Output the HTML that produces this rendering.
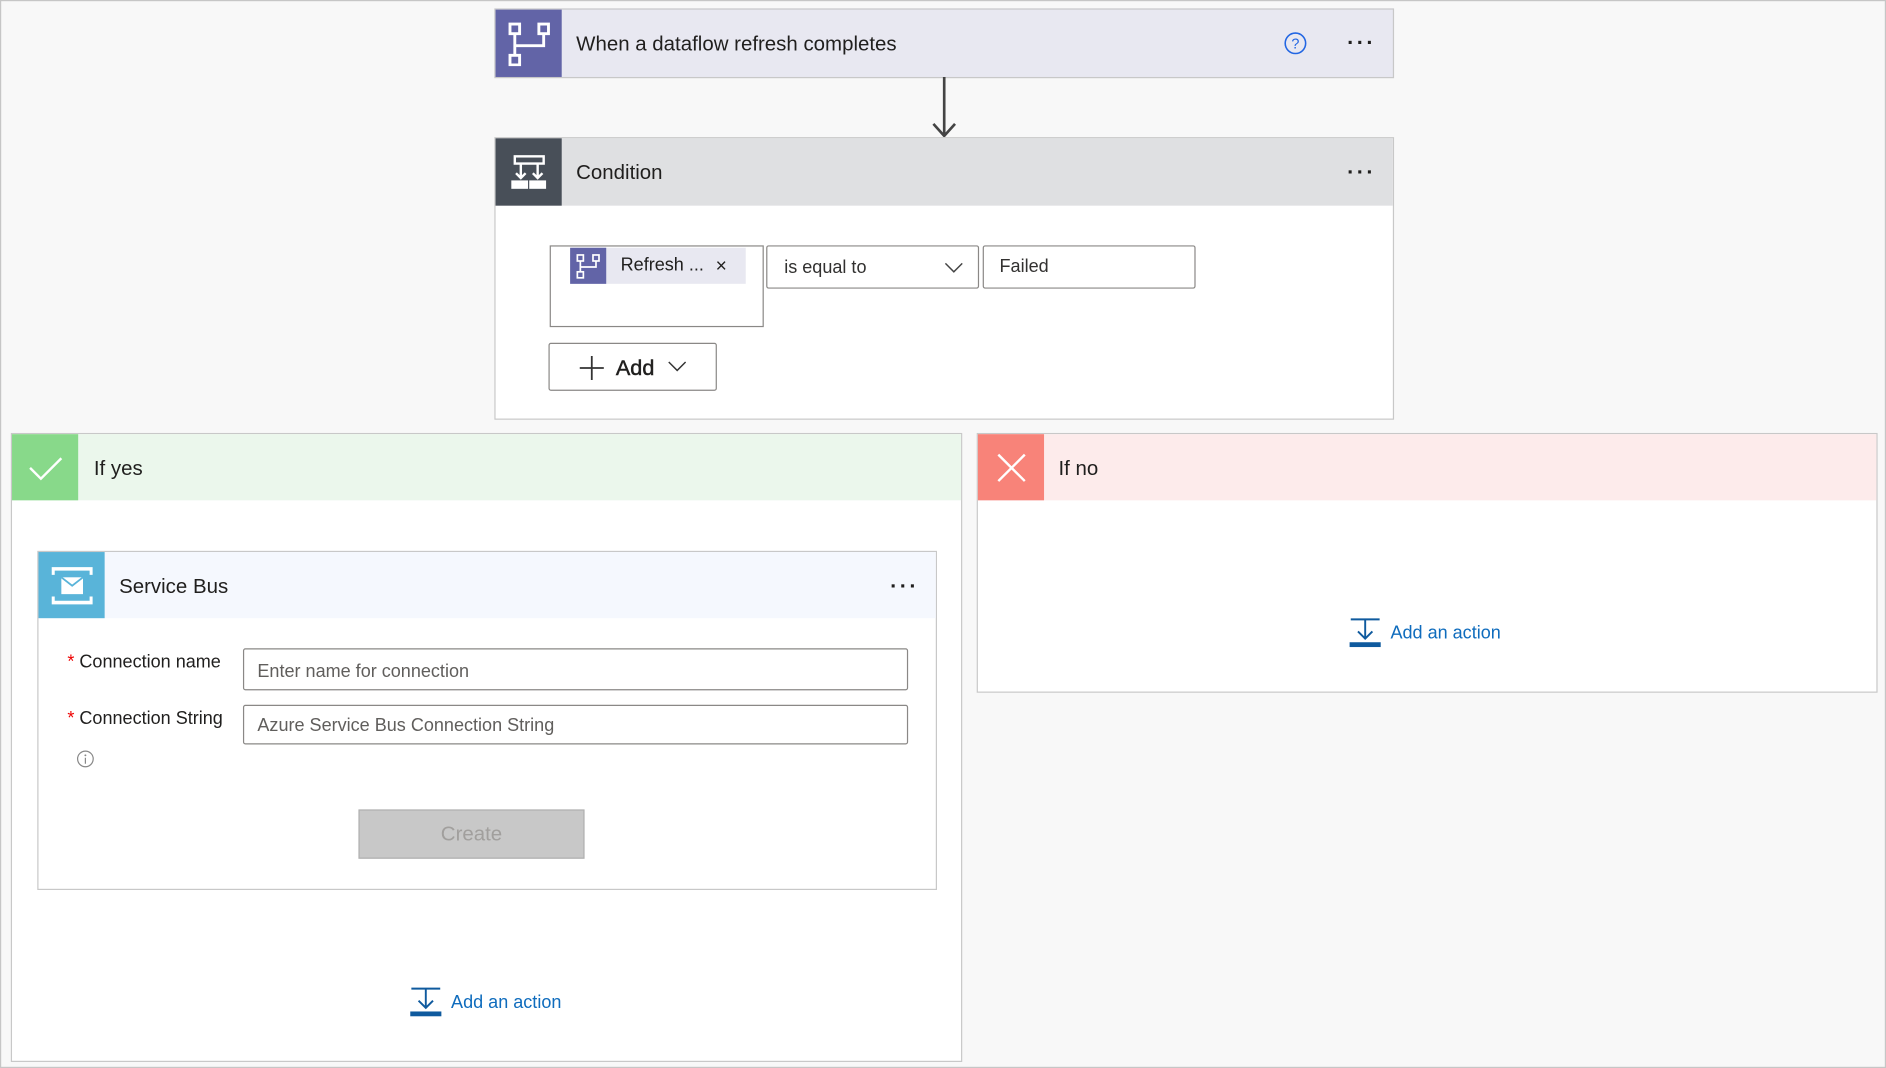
<!DOCTYPE html>
<html><head><meta charset="utf-8"><style>
*{box-sizing:border-box;margin:0;padding:0}
html,body{width:1886px;height:1068px;overflow:hidden;background:#f8f8f8}
#w{position:absolute;left:0;top:0;width:1568px;height:888px;transform:scale(1.20281,1.20270);transform-origin:0 0;font-family:"Segoe UI","Liberation Sans",sans-serif;color:#201f1e;border:1px solid #c6c6c6;background:#f8f8f8}
.a{position:absolute}
.card{position:absolute;border:1px solid #c8c8c8;background:#fff}
.hd{position:absolute;left:0;top:0;right:0;height:56px}
.ic{position:absolute;left:0;top:0;width:55px;height:56px;display:flex;align-items:center;justify-content:center}
.tt{position:absolute;left:67px;top:1px;line-height:56px;font-size:17px}
.dots{position:absolute;right:14px;top:18px;font-size:18px;letter-spacing:2px;font-weight:bold}
.inp{position:absolute;border:1px solid #8a8886;border-radius:2px;background:#fff;font-size:15px;color:#605e5c;padding-left:11px}
.lnk{position:absolute;color:#0f6cbd;font-size:15px;display:flex;align-items:center;gap:8px}
</style></head><body><div id="w">

<div class="card" style="left:410px;top:6px;width:748px;height:58px;background:#e8e8f1">
 <div class="ic" style="background:#6264a7"><svg width="36" height="38" viewBox="0 0 36 38" fill="none" stroke="#fff" stroke-width="2.4"><rect x="2" y="3" width="8" height="8"/><rect x="26" y="3" width="8" height="8"/><rect x="2" y="29" width="8" height="8"/><path d="M6 11V29M30 11V21H6"/></svg></div>
 <div class="tt">When a dataflow refresh completes</div>
 <svg class="a" style="left:655px;top:18px" width="20" height="20" viewBox="0 0 20 20"><circle cx="10" cy="10" r="8.5" fill="none" stroke="#2266e3" stroke-width="1.3"/><text x="10" y="14.5" font-size="12" text-anchor="middle" fill="#2266e3" font-family="Liberation Sans">?</text></svg>
 <div class="dots" style="top:17px">···</div>
</div>

<svg class="a" style="left:772px;top:63px" width="24" height="52"><path d="M12 0V49M3 39L12 49L21 39" stroke="#444" stroke-width="2.2" fill="none"/></svg>

<div class="card" style="left:410px;top:113px;width:748px;height:235px">
 <div class="hd" style="background:#dfe0e2"></div>
 <div class="ic" style="background:#484f58"><svg width="30" height="30" viewBox="0 0 30 30" fill="none" stroke="#fff" stroke-width="2"><rect x="3" y="2" width="24" height="6"/><path d="M8 8V20M4 16L8 20L12 16M22 8V20M18 16L22 20L26 16"/><rect x="1" y="23" width="12" height="5" fill="#fff"/><rect x="16" y="23" width="12" height="5" fill="#fff"/></svg></div>
 <div class="tt">Condition</div>
 <div class="dots">···</div>
 <div class="a" style="left:45px;top:89px;width:178px;height:68px;border:1px solid #8a8886"></div>
 <div class="a" style="left:62px;top:91px;width:146px;height:30px;background:#e8e8f1"><div class="a" style="left:0;top:0;width:30px;height:30px;background:#6264a7;display:flex;align-items:center;justify-content:center"><svg width="20" height="22" viewBox="0 0 20 22" fill="none" stroke="#fff" stroke-width="1.4"><rect x="1" y="2" width="5" height="5"/><rect x="14" y="2" width="5" height="5"/><rect x="1" y="16" width="5" height="5"/><path d="M3.5 7V16M16.5 7V12H3.5"/></svg></div><div class="a" style="left:42px;top:6px;font-size:15px">Refresh ...</div><div class="a" style="left:121px;top:7px;font-size:16px">×</div></div>
 <div class="inp" style="left:225px;top:89px;width:177px;height:36px;line-height:36px;color:#323130;padding-left:14px">is equal to<svg class="a" style="right:12px;top:13px" width="16" height="10"><path d="M1 1L8 8L15 1" stroke="#444" fill="none" stroke-width="1.2"/></svg></div>
 <div class="inp" style="left:405px;top:89px;width:177px;height:36px;line-height:34px;color:#323130;padding-left:13px">Failed</div>
 <div class="a" style="left:44px;top:170px;width:140px;height:40px;border:1px solid #8a8886;border-radius:2px;font-size:18px;font-weight:normal;line-height:40px;padding-left:55px;-webkit-text-stroke:0.4px #201f1e">Add<svg class="a" style="left:24px;top:9px" width="22" height="22"><path d="M11 1V21M1 11H21" stroke="#333" stroke-width="1.5"/></svg><svg class="a" style="left:98px;top:14px" width="16" height="10"><path d="M1 1L8 8L15 1" stroke="#333" fill="none" stroke-width="1.2"/></svg></div>
</div>

<div class="card" style="left:8px;top:359px;width:791px;height:523px">
 <div class="hd" style="background:#ebf7ec;height:55px"></div>
 <div class="ic" style="background:#88d98a;height:55px"><svg width="30" height="24"><path d="M2 12L11 21L28 4" stroke="#fff" stroke-width="2" fill="none"/></svg></div>
 <div class="tt" style="left:68px;line-height:55px">If yes</div>
 <div class="card" style="left:21px;top:97px;width:748px;height:282px">
  <div class="hd" style="background:#f5f8fe;height:55px"></div>
  <div class="ic" style="background:#59b4d9;height:55px"><svg width="34" height="34" viewBox="0 0 34 34" fill="none" stroke="#fff" stroke-width="3"><path d="M1 8V3H33V8M1 26V31H33V26"/><rect x="8" y="10" width="18" height="14" fill="#fff" stroke="none"/><path d="M8 10L17 17L26 10" stroke="#59b4d9" stroke-width="1.5"/></svg></div>
  <div class="tt" style="line-height:55px">Service Bus</div>
  <div class="dots">···</div>
  <div class="a" style="left:24px;top:83px;font-size:15px"><span style="color:#e00">*</span> Connection name</div>
  <div class="a" style="left:24px;top:130px;font-size:15px"><span style="color:#e00">*</span> Connection String</div>
  <svg class="a" style="left:31px;top:164px" width="16" height="16"><circle cx="8" cy="8" r="6.5" fill="none" stroke="#888"/><path d="M8 7V12" stroke="#888"/><circle cx="8" cy="5" r=".8" fill="#888"/></svg>
  <div class="inp" style="left:170px;top:80px;width:553px;height:35px;line-height:37px">Enter name for connection</div>
  <div class="inp" style="left:170px;top:127px;width:553px;height:33px;line-height:34px">Azure Service Bus Connection String</div>
  <div class="a" style="left:266px;top:214px;width:188px;height:41px;background:#c8c8c8;border:1px solid #b0b0b0;color:#a19f9d;font-size:17px;text-align:center;line-height:40px">Create</div>
 </div>
 <div class="lnk" style="left:331px;top:459px"><svg width="26" height="26" viewBox="0 0 26 26" fill="none" stroke="#0f5a9e" stroke-width="1.6"><path d="M1 2H25M13 2V18M7 12L13 18L19 12"/><rect x="0" y="21" width="26" height="4" fill="#0f5a9e" stroke="none"/></svg>Add an action</div>
</div>

<div class="card" style="left:811px;top:359px;width:749px;height:216px">
 <div class="hd" style="background:#fdebeb;height:55px"></div>
 <div class="ic" style="background:#f88379;height:55px"><svg width="26" height="26"><path d="M2 2L24 24M24 2L2 24" stroke="#fff" stroke-width="2"/></svg></div>
 <div class="tt" style="line-height:55px">If no</div>
 <div class="lnk" style="left:309px;top:152px"><svg width="26" height="26" viewBox="0 0 26 26" fill="none" stroke="#0f5a9e" stroke-width="1.6"><path d="M1 2H25M13 2V18M7 12L13 18L19 12"/><rect x="0" y="21" width="26" height="4" fill="#0f5a9e" stroke="none"/></svg>Add an action</div>
</div>

</div></body></html>
